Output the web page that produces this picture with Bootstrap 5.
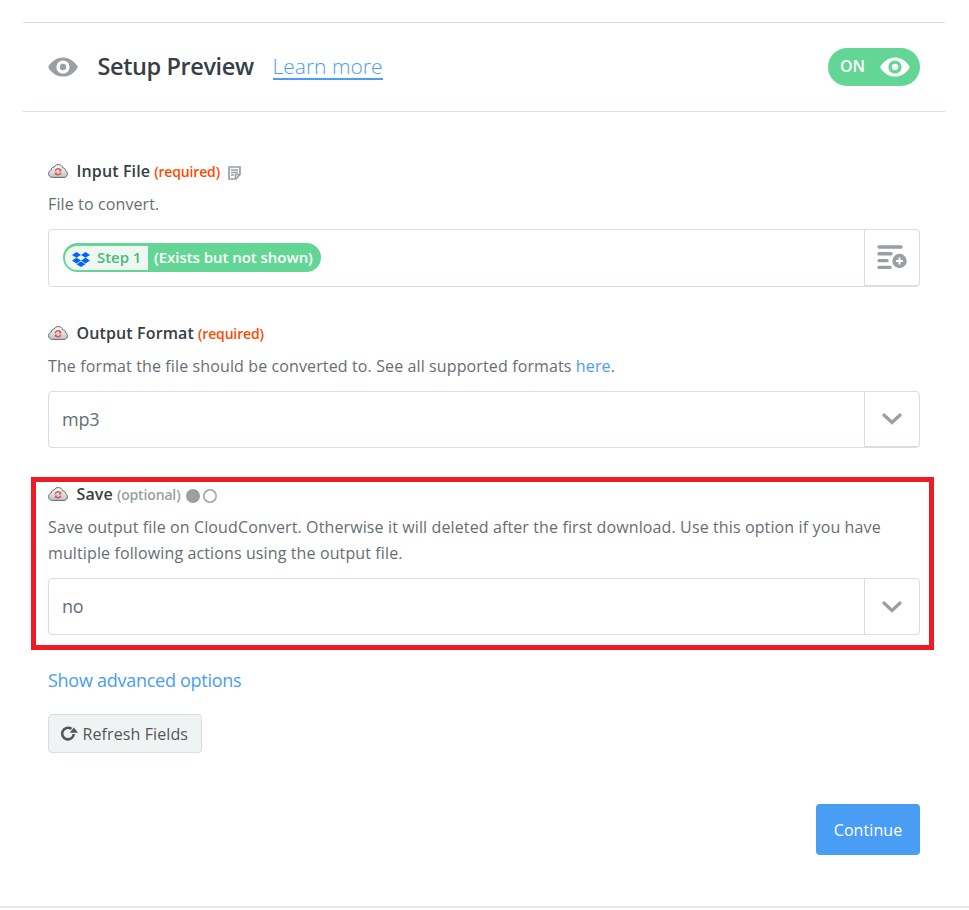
<!DOCTYPE html>
<html lang="en">
<head>
<meta charset="utf-8">
<meta name="viewport" content="width=device-width, initial-scale=1">
<title>Setup Preview</title>
<link href="https://cdn.jsdelivr.net/npm/bootstrap@5.3.0/dist/css/bootstrap.min.css" rel="stylesheet">
<style>
body{font-family:"Open Sans",sans-serif;color:#666e73;font-size:16px;line-height:26px;background:#fff;overflow:hidden}
svg{display:block;flex:none}
.panel{height:908px;padding:22px 24px 0 23px;border-bottom:2px solid #e6e9ea}
.head{height:90px;border-top:1px solid #d9dee0;border-bottom:1px solid #d9dee0;padding:0 25px}
.title{width:156px;white-space:nowrap;font-size:23.500px;font-weight:600;color:#354045;margin:0 0 2px 19.500px;line-height:32px;letter-spacing:-.4px}
.learn{font-size:21px;font-weight:300;color:#499df3;margin-left:19px;line-height:25px;text-decoration:none;border-bottom:2px solid #499df3;height:26px}
.switch{width:92px;height:38px;background:#63d695;color:#fff;font-weight:600;font-size:16px;padding:0 10px 0 12px}
.switch span{margin-bottom:2px}
.field{padding:0 25px}
.f1{margin-top:46px}
.f2{margin-top:33px}
.lab{height:26px;font-size:16px;font-weight:600;color:#354045}
.lab>span{margin-left:8.500px;white-space:nowrap;letter-spacing:.13px}
.lab small{font-size:14px;font-weight:600;letter-spacing:-.15px;margin:2px 0 0 4px;line-height:26px}
.req{color:#ff4a00}
.opt{color:#999fa2}
.desc{margin:7px 0 0;letter-spacing:.12px}
.desc a,.adv{color:#499df3;text-decoration:none}
.ctl{height:57px;border:1px solid #d9dee0;border-radius:4px;margin-top:12px;font-size:18px;padding-left:13px;background:#fff}
.ctl>span{margin-bottom:2px;letter-spacing:-.2px}
.side{width:55px;height:100%;border-left:1px solid #d9dee0;border-bottom:1px solid #d9dee0;border-radius:0 0 3px 0}
.token{height:29px;width:258px;background:#63d695;border-radius:15px;padding:3px 0 3px 2px;font-size:15px;letter-spacing:-.04px;line-height:22px;font-weight:600;color:#fff;white-space:nowrap;margin:0 0 1px 1px}
.token span{margin-bottom:2px}
.step{background:#eef8f3;color:#4cba79;border-radius:13px 0 0 13px;height:24px;width:83px;padding-left:7px;gap:7px;margin-right:6px}
.marked{margin:29px 11px 0 8px;height:173px;border:5px solid #ed1c24;padding:0 9px 0 12px}
.marked .lab{margin-top:-1px}
.adv{font-size:18px;letter-spacing:-.27px;margin-top:17px;display:inline-block}
.refresh{width:154px;height:39px;border:1px solid #d9dee0;background:#f0f3f4;border-radius:4px;color:#555;font-size:16px;letter-spacing:.1px;margin-top:20px;padding:0 0 0 12px;gap:4.500px}
.go{width:104px;height:51px;background:#499df3;color:#fff;border:0;border-radius:4px;font-size:16px;letter-spacing:.08px;margin-top:51px;padding:0}
</style>
</head>
<body>
<svg width="0" height="0" class="position-absolute" aria-hidden="true">
<defs>
<linearGradient id="cg" x1="0" y1="0" x2="0" y2="1"><stop offset="0" stop-color="#fff"/><stop offset="1" stop-color="#bfc1c3"/></linearGradient>
<symbol id="cloud" viewBox="0 0 20 14"><path d="M4.300 13.400C2 13.400.6 11.800.6 9.600c0-2 1.200-3.300 2.700-3.600C3.400 4 4.700 3 6.200 3.100 7 1.400 8.400.6 10.300.6c2.500 0 4.100 1.400 4.500 3.300 1.900 0 2.800 1.200 2.700 2.700 1.300.5 1.900 1.700 1.900 3.100 0 2.200-1.400 3.700-3.400 3.700z" fill="url(#cg)" stroke="#66696b" stroke-width="1"/><path d="M7.300 7.300c.3-3 4.200-3.300 5.200-1.200M12.800 8.700c-.7 2.500-4.200 2.800-5.200.7" fill="none" stroke="#e05252" stroke-width="1.500"/><path d="M13.300 4.600v2.800h-2.800zM6.800 11.200V8.400h2.800z" fill="#e05252"/></symbol>
<symbol id="eye" viewBox="0 0 30 20"><path fill-rule="evenodd" d="M15 .4C8.500.4 3.300 4.500.6 9.100q-.5.900 0 1.800C3.300 15.500 8.500 19.600 15 19.600s11.700-4.100 14.400-8.700q.5-.9 0-1.800C26.700 4.500 21.500.4 15 .4zm0 3a6.600 6.600 0 1 1 0 13.200 6.600 6.600 0 0 1 0-13.200z"/><circle cx="15" cy="10" r="3.200"/></symbol>
<symbol id="chev" viewBox="0 0 20 12"><path d="M2 2l8 7.500L18 2" fill="none" stroke="#999fa2" stroke-width="3.200" stroke-linecap="round" stroke-linejoin="miter"/></symbol>
</defs></svg>

<main class="panel">
  <header class="head d-flex align-items-center">
    <svg width="30" height="20" fill="#999fa2"><use href="#eye"/></svg>
    <h1 class="title">Setup Preview</h1>
    <a class="learn" href="#">Learn more</a>
    <div class="switch ms-auto rounded-pill d-flex align-items-center justify-content-between"><span>ON</span><svg width="30" height="20" fill="#fff"><use href="#eye"/></svg></div>
  </header>

  <section class="field f1">
    <div class="lab d-flex align-items-center"><svg width="20" height="14"><use href="#cloud"/></svg><span>Input File</span><small class="req">(required)</small>
      <svg class="ms-2 mt-1" width="13" height="14" viewBox="0 0 13 14"><path d="M1 1h11v7.500L7.800 13H1z" fill="none" stroke="#999fa2" stroke-width="1.700"/><path d="M3 4h7M3 6.500h7M3 9h3" stroke="#999fa2" stroke-width="1.300"/><path d="M7.500 13V8.500H12" fill="none" stroke="#999fa2" stroke-width="1.500"/></svg></div>
    <p class="desc">File to convert.</p>
    <div class="ctl d-flex align-items-center justify-content-between" style="height:58px">
      <div class="token d-flex align-items-center">
        <div class="step d-flex align-items-center"><svg class="mt-1" width="18" height="15" viewBox="0 0 18 15" fill="#0061ff"><path d="M4.500 0L9 2.900 4.500 5.700 0 2.900zM13.500 0L18 2.900l-4.500 2.800L9 2.900zM4.500 5.700L9 8.600l-4.500 2.800L0 8.600zM13.500 5.700L18 8.600l-4.500 2.800L9 8.600zM4.500 12.200L9 9.400l4.500 2.800L9 15z"/></svg><span>Step 1</span></div>
        <span>(Exists but not shown)</span>
      </div>
      <div class="side d-flex align-items-center justify-content-center"><svg width="30" height="26" viewBox="0 0 30 26"><path d="M2 2h22M2 8.800h12M2 15.600h8M2 22.400h11" stroke="#999fa2" stroke-width="3.400" stroke-linecap="round"/><circle cx="22.500" cy="16" r="7.200" fill="#999fa2"/><path d="M22.500 12.500v7M19 16h7" stroke="#fff" stroke-width="2"/></svg></div>
    </div>
  </section>

  <section class="field f2">
    <div class="lab d-flex align-items-center"><svg width="20" height="14"><use href="#cloud"/></svg><span>Output Format</span><small class="req">(required)</small></div>
    <p class="desc">The format the file should be converted to. See all supported formats <a href="#">here</a>.</p>
    <div class="ctl d-flex align-items-center justify-content-between"><span>mp3</span><div class="side d-flex align-items-center justify-content-center"><svg width="20" height="12"><use href="#chev"/></svg></div></div>
  </section>

  <section class="marked">
    <div class="lab d-flex align-items-center"><svg width="20" height="14"><use href="#cloud"/></svg><span>Save</span><small class="opt">(optional)</small>
      <svg class="ms-1 mt-1" width="33" height="14" viewBox="0 0 33 14"><circle cx="9" cy="7" r="7" fill="#999fa2"/><circle cx="26" cy="7" r="6.200" fill="#fff" stroke="#999fa2" stroke-width="1.500"/></svg></div>
    <p class="desc">Save output file on CloudConvert. Otherwise it will deleted after the first download. Use this option if you have multiple following actions using the output file.</p>
    <div class="ctl d-flex align-items-center justify-content-between"><span>no</span><div class="side border-bottom-0 d-flex align-items-center justify-content-center"><svg width="20" height="12"><use href="#chev"/></svg></div></div>
  </section>

  <div class="field">
    <a class="adv" href="#">Show advanced options</a>
    <button class="refresh d-flex align-items-center"><svg width="17" height="15" viewBox="0 0 17 15"><path d="M10.500 2.900A5.800 5.800 0 1 0 12.800 8" fill="none" stroke="#555" stroke-width="2.600"/><path d="M8.700 6.700L12.900 1.500l4.100 5.200z" fill="#555"/></svg><span>Refresh Fields</span></button>
    <div class="d-flex justify-content-end"><button class="go">Continue</button></div>
  </div>
</main>
<script src="https://cdn.jsdelivr.net/npm/bootstrap@5.3.0/dist/js/bootstrap.bundle.min.js"></script>
</body>
</html>
